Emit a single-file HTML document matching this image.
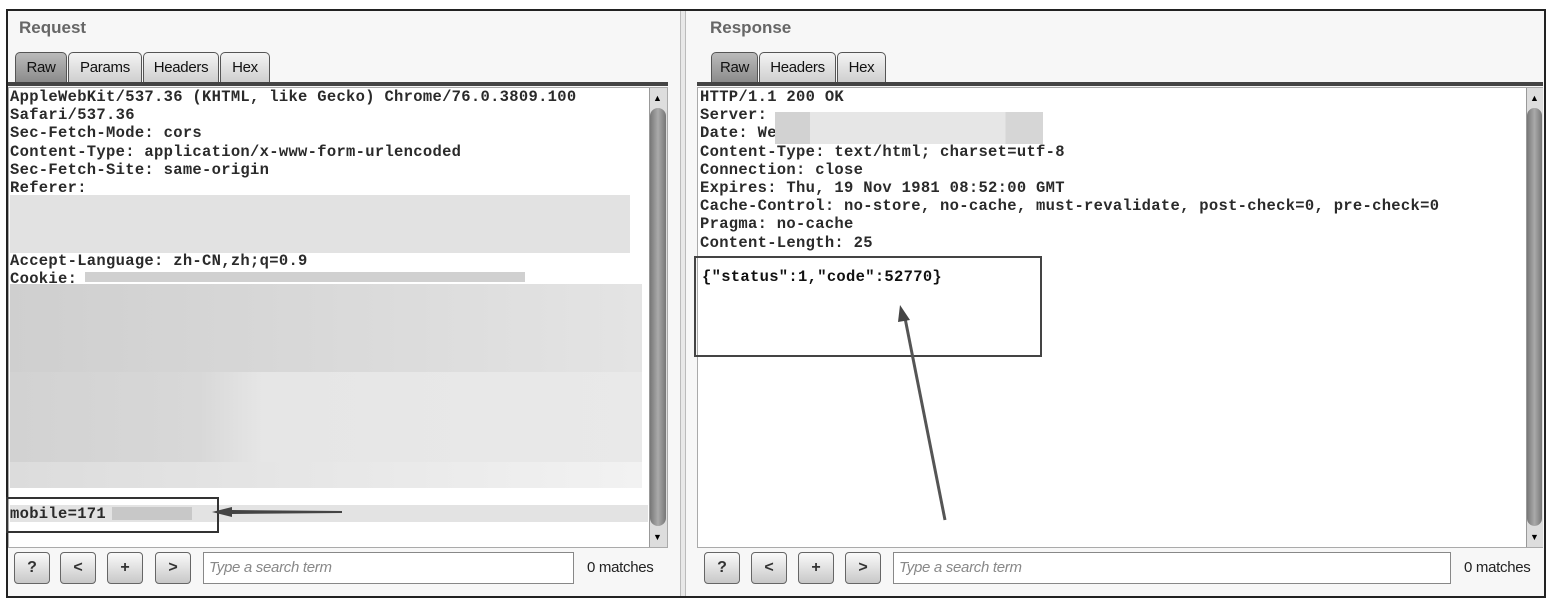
<!DOCTYPE html>
<html><head><style>
*{margin:0;padding:0;box-sizing:border-box}
body{width:1552px;height:604px;background:#fff;position:relative;overflow:hidden;font-family:"Liberation Sans",sans-serif}
.a{position:absolute}
.outer{left:6px;top:9px;width:1540px;height:589px;border:2px solid #222;background:#f7f7f7}
.title{font-size:17px;color:#666;font-weight:bold}
.tab{position:absolute;top:52px;height:32px;border:1px solid #555;border-bottom:none;border-radius:5px 5px 0 0;background:linear-gradient(#f4f4f4,#ccc);font-size:15px;color:#111;text-align:center;line-height:30px;letter-spacing:-0.3px}
.tab.on{background:linear-gradient(#bbb,#888)}
.bar{height:4px;background:#444}
.ta{background:#fff;border:1px solid #aaa}
.mono{font-family:"Liberation Mono",monospace;font-size:15.5px;line-height:18.2px;color:#2a2a2a;font-weight:bold;white-space:pre;letter-spacing:0.3px}
.sb{background:#ddd;border-left:1px solid #999}
.thumb{background:linear-gradient(90deg,#777,#aaa,#777);border-radius:8px}
.btn{position:absolute;top:552px;width:36px;height:32px;border:1px solid #666;border-radius:4px;background:linear-gradient(#fafafa,#c8c8c8);font-size:16px;font-weight:bold;text-align:center;line-height:30px;color:#333}
.srch{position:absolute;top:552px;height:32px;border:1px solid #888;background:#fff;font-size:15px;font-style:italic;color:#888;padding:6px 5px;letter-spacing:-0.3px}
.blur{position:absolute;background:#e0e0e0}
</style></head><body>
<div class="a outer"></div>
<div class="a" style="left:680px;top:11px;width:6px;height:585px;background:#e8e8e8;border-left:1px solid #bbb;border-right:1px solid #bbb"></div>

<!-- Left -->
<div class="a title" style="left:19px;top:18px">Request</div>
<div class="tab on" style="left:15px;width:52px">Raw</div>
<div class="tab" style="left:68px;width:74px">Params</div>
<div class="tab" style="left:143px;width:76px">Headers</div>
<div class="tab" style="left:220px;width:50px">Hex</div>
<div class="a bar" style="left:8px;top:82px;width:660px"></div>
<div class="a ta" style="left:8px;top:87px;width:660px;height:461px"></div>
<div class="a mono" style="left:10px;top:88px">AppleWebKit/537.36 (KHTML, like Gecko) Chrome/76.0.3809.100
Safari/537.36
Sec-Fetch-Mode: cors
Content-Type: application/x-www-form-urlencoded
Sec-Fetch-Site: same-origin
Referer:



Accept-Language: zh-CN,zh;q=0.9
Cookie:</div>
<div class="blur" style="left:10px;top:195px;width:620px;height:58px;background:#e2e2e2"></div>
<div class="blur" style="left:85px;top:272px;width:440px;height:10px;background:#d0d0d0"></div>
<div class="blur" style="left:10px;top:284px;width:632px;height:88px;background:linear-gradient(90deg,#cfcfcf,#d8d8d8 45%,#e4e4e4)"></div>
<div class="blur" style="left:10px;top:372px;width:632px;height:90px;background:linear-gradient(90deg,#d2d2d2,#d8d8d8 30%,#e6e6e6 40%,#e9e9e9)"></div>
<div class="blur" style="left:10px;top:462px;width:632px;height:26px;background:linear-gradient(90deg,#dcdcdc,#e6e6e6 45%,#f2f2f2)"></div>
<div class="blur" style="left:10px;top:505px;width:638px;height:17px;background:#e3e3e3"></div>
<div class="a mono" style="left:10px;top:505px">mobile=171</div>
<div class="blur" style="left:112px;top:507px;width:80px;height:13px;background:#c8c8c8"></div>
<div class="a" style="left:6px;top:497px;width:213px;height:36px;border:2px solid #333"></div>
<svg class="a" style="left:210px;top:503px" width="140" height="20"><polygon points="2,9 22,4 22,7 132,8 132,10 22,11 22,14" fill="#444"/></svg>
<div class="a sb" style="left:649px;top:88px;width:18px;height:459px"></div>
<div class="a thumb" style="left:650px;top:108px;width:16px;height:418px"></div>
<div class="a" style="left:653px;top:93px;font-size:9px">▲</div>
<div class="a" style="left:653px;top:532px;font-size:9px">▼</div>
<div class="btn" style="left:14px">?</div>
<div class="btn" style="left:60px">&lt;</div>
<div class="btn" style="left:107px">+</div>
<div class="btn" style="left:155px">&gt;</div>
<div class="srch" style="left:203px;width:371px">Type a search term</div>
<div class="a" style="left:587px;top:559px;font-size:15px;color:#222;letter-spacing:-0.3px">0 matches</div>

<!-- Right -->
<div class="a title" style="left:710px;top:18px">Response</div>
<div class="tab on" style="left:711px;width:47px">Raw</div>
<div class="tab" style="left:759px;width:77px">Headers</div>
<div class="tab" style="left:837px;width:49px">Hex</div>
<div class="a bar" style="left:697px;top:82px;width:846px"></div>
<div class="a ta" style="left:697px;top:87px;width:846px;height:461px"></div>
<div class="a mono" style="left:700px;top:88px">HTTP/1.1 200 OK
Server:
Date: We
Content-Type: text/html; charset=utf-8
Connection: close
Expires: Thu, 19 Nov 1981 08:52:00 GMT
Cache-Control: no-store, no-cache, must-revalidate, post-check=0, pre-check=0
Pragma: no-cache
Content-Length: 25</div>
<div class="blur" style="left:775px;top:112px;width:268px;height:32px;background:linear-gradient(90deg,#d2d2d2 0 13%,#e6e6e6 13% 86%,#d6d6d6 86%)"></div>
<div class="a mono" style="left:702px;top:268px;color:#111">{"status":1,"code":52770}</div>
<div class="a" style="left:694px;top:256px;width:348px;height:101px;border:2px solid #444"></div>
<svg class="a" style="left:890px;top:300px" width="70" height="225"><line x1="55" y1="220" x2="15" y2="18" stroke="#555" stroke-width="3"/><polygon points="10,5 20,20 8,22" fill="#444"/></svg>
<div class="a sb" style="left:1526px;top:88px;width:17px;height:459px"></div>
<div class="a thumb" style="left:1527px;top:108px;width:15px;height:418px"></div>
<div class="a" style="left:1530px;top:93px;font-size:9px">▲</div>
<div class="a" style="left:1530px;top:532px;font-size:9px">▼</div>
<div class="btn" style="left:704px">?</div>
<div class="btn" style="left:751px">&lt;</div>
<div class="btn" style="left:798px">+</div>
<div class="btn" style="left:845px">&gt;</div>
<div class="srch" style="left:893px;width:558px">Type a search term</div>
<div class="a" style="left:1464px;top:559px;font-size:15px;color:#222;letter-spacing:-0.3px">0 matches</div>
</body></html>
